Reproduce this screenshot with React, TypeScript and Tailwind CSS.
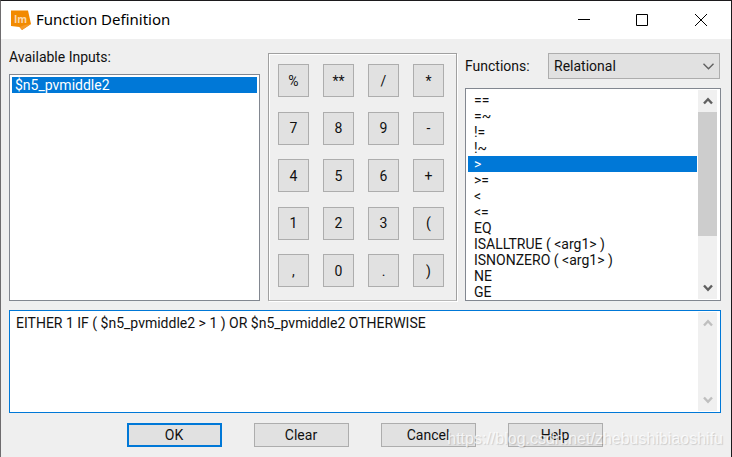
import { useState } from 'react';

const inputs = ['$n5_pvmiddle2'];

const keys = [
    '%', '**', '/', '*',
    '7', '8', '9', '-',
    '4', '5', '6', '+',
    '1', '2', '3', '(',
    ',', '0', '.', ')',
];

const functions = [
    '==', '=~', '!=', '!~', '>', '>=', '<', '<=', 'EQ',
    'ISALLTRUE ( <arg1> )', 'ISNONZERO ( <arg1> )', 'NE', 'GE',
];

function Logo() {
    return (
        <svg className="w-5 h-5" viewBox="0 0 20 20" aria-hidden="true">
            <path d="M0 .5 L17 .5 L20 14 L11 20 L8.5 17 L0 16 Z" fill="#f28a00" />
            <path d="M14 15 L20 14 L11 20 L8.5 17 Z" fill="#f59a2a" />
            <text x="9.5" y="12.5" textAnchor="middle" fontSize="10" fontWeight="700" fontFamily="Open Sans, sans-serif" fill="#fbd9ad">Im</text>
        </svg>
    );
}

function Chevron({ up = false }: { up?: boolean }) {
    return (
        <svg width="10" height="8" viewBox="0 0 10 8" fill="none" stroke="currentColor" strokeWidth="2.4" aria-hidden="true">
            <path d={up ? 'M1 6.5 L5 2.2 L9 6.5' : 'M1 1.5 L5 5.8 L9 1.5'} />
        </svg>
    );
}

function ScrollBar({ disabled = false, children }: { disabled?: boolean; children?: React.ReactNode }) {
    const tone = disabled ? 'text-[#bfbfbf]' : 'text-[#606060]';
    return (
        <div className="mr-0.5 ml-px flex w-[19px] shrink-0 flex-col bg-[#f0f0f0]">
            <button type="button" aria-label="Scroll up" disabled={disabled} className={`flex h-[22px] shrink-0 items-center justify-center ${tone}`}>
                <Chevron up />
            </button>
            <div className="min-h-0 flex-1">{children}</div>
            <button type="button" aria-label="Scroll down" disabled={disabled} className={`flex h-[22px] shrink-0 items-center justify-center ${tone}`}>
                <Chevron />
            </button>
        </div>
    );
}

function App() {
    const [selected, setSelected] = useState('>');
    const [expression, setExpression] = useState('EITHER 1 IF ( $n5_pvmiddle2 > 1 ) OR $n5_pvmiddle2 OTHERWISE');

    return (
        <div className="relative flex min-h-screen flex-col border-x border-t border-t-[#1c1a1d] border-r-[#1c1a1d] border-l-[#6e6c6e] bg-[#efefef] font-['Roboto',sans-serif] text-sm text-[#111111]">
            <header className="flex h-[38px] items-center bg-white pl-2.5 text-black">
                <Logo />
                <h1 className="ml-[5px] flex-1 font-['Noto_Sans',sans-serif] text-[15px]">Function Definition</h1>
                <button type="button" aria-label="Minimize" className="flex h-full w-[59px] items-center justify-center">
                    <svg width="12" height="12" viewBox="0 0 12 12" stroke="currentColor" aria-hidden="true"><path d="M0 5.5H12" /></svg>
                </button>
                <button type="button" aria-label="Maximize" className="flex h-full w-[58px] items-center justify-center">
                    <svg width="12" height="12" viewBox="0 0 12 12" fill="none" stroke="currentColor" aria-hidden="true"><path d="M.5 .5H11.5V11.5H.5Z" /></svg>
                </button>
                <button type="button" aria-label="Close" className="mr-px flex h-full w-[59px] items-center justify-center">
                    <svg width="12" height="12" viewBox="0 0 12 12" stroke="currentColor" aria-hidden="true"><path d="M0 0L12 12M12 0L0 12" /></svg>
                </button>
            </header>

            <main className="flex flex-1 flex-col pl-2 pr-2.5">
                <div className="grid grid-cols-[251fr_189fr_256fr] gap-2">
                    <section className="flex flex-col pt-2">
                        <h2 id="inputs-label" className="h-[27px] leading-5">Available Inputs:</h2>
                        <ul role="listbox" aria-labelledby="inputs-label" className="flex-1 border border-[#828790] bg-white p-0.5">
                            {inputs.map((name) => (
                                <li key={name} role="option" aria-selected="true" className="h-4 bg-[#0078d7] pl-[3px] leading-4 text-white">
                                    {name}
                                </li>
                            ))}
                        </ul>
                    </section>

                    <section aria-label="Keypad" className="mt-3.5 border border-[#a0a0a0] border-b-[#b8b8b8] pt-2.5 pr-3 pb-[13px] pl-[9px] shadow-[1px_1px_0_#ffffff,inset_1px_1px_0_#ffffff]">
                        <div className="grid h-full grid-cols-[repeat(4,31px)] content-between justify-between">
                            {keys.map((key) => (
                                <button
                                    key={key}
                                    type="button"
                                    className="h-[33px] border border-[#adadad] bg-[#e1e1e1]"
                                    onClick={() => setExpression(expression + key)}
                                >
                                    {key}
                                </button>
                            ))}
                        </div>
                    </section>

                    <section className="flex min-w-0 flex-col pt-3.5">
                        <div className="flex h-[26px] items-center justify-between">
                            <label htmlFor="category">Functions:</label>
                            <div className="relative mr-px h-full w-[172px]">
                                <select id="category" className="h-full w-full appearance-none border border-[#adadad] bg-[#e1e1e1] pl-[5px]">
                                    <option>Relational</option>
                                </select>
                                <svg className="pointer-events-none absolute top-[10px] right-1.5" width="11" height="7" viewBox="0 0 11 7" fill="none" stroke="#606060" strokeWidth="1.4" aria-hidden="true">
                                    <path d="M.5 .7L5.5 5.7L10.5 .7" />
                                </svg>
                            </div>
                        </div>
                        <div className="mt-[9px] flex h-[213px] border border-[#828790] bg-white p-px">
                            <ul role="listbox" aria-label="Functions" className="min-w-0 flex-1 overflow-hidden pt-0.5 pl-px">
                                {functions.map((fn) => (
                                    <li
                                        key={fn}
                                        role="option"
                                        aria-selected={fn === selected}
                                        className={`h-4 pl-1.5 leading-4 ${fn === selected ? 'bg-[#0078d7] text-white' : ''}`}
                                        onClick={() => setSelected(fn)}
                                    >
                                        {fn}
                                    </li>
                                ))}
                            </ul>
                            <ScrollBar>
                                <div className="h-3/4 bg-[#cdcdcd]" />
                            </ScrollBar>
                        </div>
                    </section>
                </div>

                <div className="mt-[9px] flex h-[103px] border border-[#0078d7] bg-white p-px">
                    <textarea
                        aria-label="Expression"
                        value={expression}
                        onChange={(e) => setExpression(e.target.value)}
                        className="min-w-0 flex-1 resize-none px-[5px] py-px leading-5 outline-none"
                    />
                    <ScrollBar disabled />
                </div>

                <footer className="mt-2.5 flex justify-center gap-8 pr-px">
                    <button type="button" className="h-6 w-[95px] border-2 border-[#0078d7] bg-[#e1e1e1]">OK</button>
                    <button type="button" className="h-6 w-[95px] border border-[#adadad] bg-[#e1e1e1]">Clear</button>
                    <button type="button" className="h-6 w-[95px] border border-[#adadad] bg-[#e1e1e1]">Cancel</button>
                    <button type="button" className="h-6 w-[95px] border border-[#adadad] bg-[#e1e1e1]">Help</button>
                </footer>
            </main>

            <span className="pointer-events-none absolute right-2 bottom-2 font-['Liberation_Sans',sans-serif] text-base leading-5 text-white/75 [text-shadow:1px_1px_1px_rgb(0_0_0/0.15)]">
                https://blog.csdn.net/zhebushibiaoshifu
            </span>
        </div>
    );
}

export default App;
